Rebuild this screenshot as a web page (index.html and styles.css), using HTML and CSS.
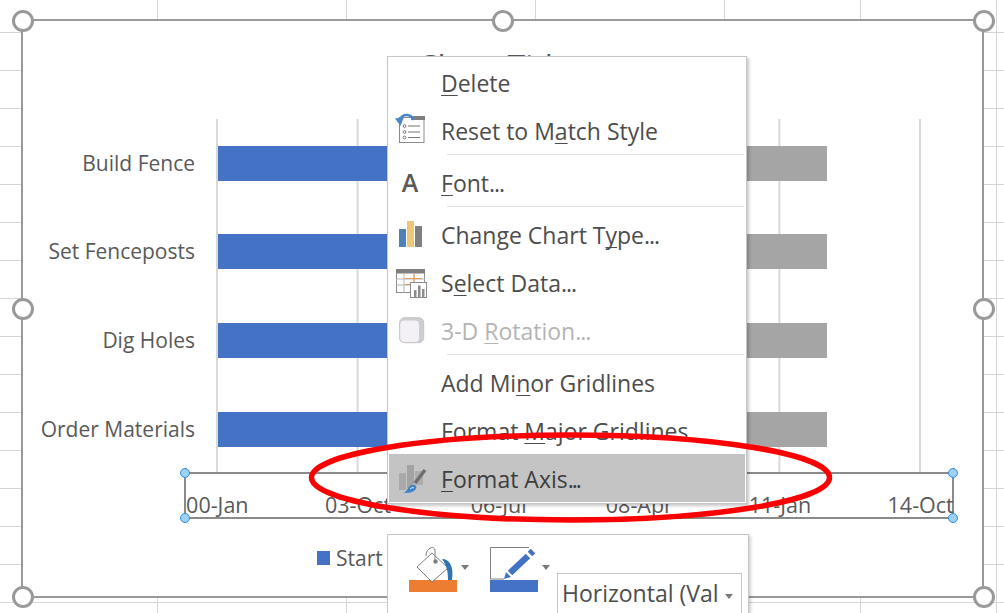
FILE: index.html
```html
<!DOCTYPE html>
<html lang="en">
<head>
<meta charset="utf-8">
<title>Format Axis</title>
<link rel="stylesheet" href="styles.css">
</head>
<body>
<div class="stage">
  <div class="chart">
    <span class="handle h-tl"></span><span class="handle h-tm"></span><span class="handle h-tr"></span>
    <span class="handle h-ml"></span><span class="handle h-mr"></span>
    <span class="handle h-bl"></span><span class="handle h-bm"></span><span class="handle h-br"></span>
    <div class="title">Chart Title</div>
    <div class="plot-wrap">
      <div class="cats">
        <div class="cat">Build Fence</div>
        <div class="cat">Set Fenceposts</div>
        <div class="cat">Dig Holes</div>
        <div class="cat">Order Materials</div>
      </div>
      <div class="plot">
        <div class="row"><div class="bar"><i class="seg-blue"></i><i class="seg-gray"></i></div></div>
        <div class="row"><div class="bar"><i class="seg-blue"></i><i class="seg-gray"></i></div></div>
        <div class="row"><div class="bar"><i class="seg-blue"></i><i class="seg-gray"></i></div></div>
        <div class="row"><div class="bar"><i class="seg-blue"></i><i class="seg-gray"></i></div></div>
      </div>
    </div>
    <div class="axis">
      <span class="dot d-tl"></span><span class="dot d-tr"></span><span class="dot d-bl"></span><span class="dot d-br"></span>
      <div class="ticks">
        <span>00-Jan</span><span>03-Oct</span><span>06-Jul</span><span>08-Apr</span><span>11-Jan</span><span>14-Oct</span>
      </div>
    </div>
    <div class="legend"><i class="swatch"></i><span>Start</span></div>
  </div>

  <div class="menu">
    <div class="item"><span class="ico"></span><span class="lbl"><u>D</u>elete</span></div>
    <div class="item"><span class="ico">
      <svg class="svg" width="30" height="30" viewBox="0 0 30 30">
        <rect x="4.500" y="4.500" width="24.500" height="25" fill="#fff" stroke="#8c8c8c"/>
        <rect x="16" y="3" width="14" height="4" fill="#7f7f7f"/>
        <g fill="#fff" stroke="#777"><circle cx="9.500" cy="13" r="1.400"/><circle cx="9.500" cy="19" r="1.400"/><circle cx="9.500" cy="24.500" r="1.400"/></g>
        <path d="M13 13h12M13 19h12M13 24.500h12" stroke="#777" fill="none"/>
        <path d="M18.500 7C16 0.500 8 0.500 5 6" fill="none" stroke="#4a86c5" stroke-width="2.600"/>
        <path d="M0 5.500L9 4L5.500 13Z" fill="#4a86c5"/>
      </svg></span><span class="lbl">Reset to M<u>a</u>tch Style</span></div>
    <div class="sep"></div>
    <div class="item"><span class="ico"><span class="glyph">A</span></span><span class="lbl"><u>F</u>ont<span class="dots">...</span></span></div>
    <div class="sep"></div>
    <div class="item"><span class="ico">
      <svg class="svg" width="30" height="30" viewBox="0 0 30 30">
        <rect x="4" y="12" width="7" height="18" fill="#4d82b8"/>
        <rect x="12" y="4" width="7" height="26" fill="#eec678"/>
        <rect x="20" y="9" width="7" height="21" fill="#7f7f7f"/>
      </svg></span><span class="lbl">Change Chart T<u>y</u>pe<span class="dots">...</span></span></div>
    <div class="item"><span class="ico">
      <svg class="svg" width="30" height="30" viewBox="0 0 30 30">
        <rect x="1.500" y="4.500" width="28" height="23" fill="#fff" stroke="#8c8c8c"/>
        <rect x="1" y="4" width="29" height="4.500" fill="#7f7f7f"/>
        <path d="M1 14h29M1 20h14M9 8v20M19 8v9" stroke="#b5b5b5" fill="none"/>
        <path d="M10 13.500h17M19 8.500v9M10 19.500h6" stroke="#ed9b52" fill="none"/>
        <rect x="15.500" y="17.500" width="16" height="15" fill="#fff" stroke="#8c8c8c"/>
        <path d="M19 32v-7h2.500v7zM23 32V20.500h2.500V32zM27 32v-8h2.500v8z" fill="#8c8c8c"/>
      </svg></span><span class="lbl">S<u>e</u>lect Data<span class="dots">...</span></span></div>
    <div class="item dis"><span class="ico">
      <svg class="svg" width="30" height="30" viewBox="0 0 30 30">
        <rect x="4.700" y="4.700" width="24" height="25" rx="5" fill="#cfcdd1" stroke="#c4c4c4"/>
        <rect x="4.700" y="7" width="20" height="22.500" rx="4" fill="#f3f0f6" stroke="#c9c9c9"/>
      </svg></span><span class="lbl">3-D <u>R</u>otation<span class="dots">...</span></span></div>
    <div class="sep"></div>
    <div class="item"><span class="ico"></span><span class="lbl">Add Mi<u>n</u>or Gridlines</span></div>
    <div class="item"><span class="ico"></span><span class="lbl">Format <u>M</u>ajor Gridlines</span></div>
    <div class="item active"><span class="ico">
      <svg class="svg" width="30" height="30" viewBox="0 0 30 30">
        <rect x="4" y="12" width="7" height="17" fill="#a9a9a9"/>
        <rect x="12" y="4" width="7" height="23" fill="#a3a3a3"/>
        <rect x="20" y="10" width="8" height="14" fill="#adadad"/>
        <path d="M30 9L20 22" stroke="#6e6e6e" stroke-width="3.500"/>
        <path d="M8 32C13 31 12 25 17 24C21 23 23 27 20 29C17 32 12 32 8 32Z" fill="#3f82cc"/>
        <path d="M15 28C16 27 18 26 19 27" stroke="#dbe9f7" fill="none"/>
      </svg></span><span class="lbl"><u>F</u>ormat Axis<span class="dots dots-tight">...</span></span></div>
  </div>

  <div class="toolbar">
    <div class="tool">
      <svg class="tool-svg" width="48" height="34" viewBox="0 0 48 34">
        <path d="M8 21L23 7L39 22L23 36Z" fill="#fff" stroke="#7f7f7f"/>
        <path d="M17 10C17 2 25 -1 26 4V15" fill="none" stroke="#7f7f7f"/>
        <circle cx="26.500" cy="15.500" r="2.200" fill="#7f7f7f"/>
        <path d="M33 13C41 13 45 21 43 34H39C39 26 38 20 33 13Z" fill="#2e75b6"/>
      </svg>
      <i class="tool-bar tb-orange"></i>
    </div>
    <i class="caret"></i>
    <div class="tool tool-2">
      <svg class="tool-svg" width="48" height="34" viewBox="0 0 48 34">
        <path d="M39 1.500H0.500V33H14" fill="none" stroke="#7f7f7f"/>
        <path d="M20 27L38 10" stroke="#4472c4" stroke-width="6.500"/>
        <path d="M40 8L43 5" stroke="#4472c4" stroke-width="6.500"/>
        <path d="M14 33L16 26L21 31Z" fill="#4472c4"/>
      </svg>
      <i class="tool-bar tb-blue"></i>
    </div>
    <i class="caret"></i>
    <div class="combo"><span class="combo-text">Horizontal (Val</span><i class="caret caret-combo"></i></div>
  </div>

  <svg class="ring" width="1004" height="613" viewBox="0 0 1004 613">
    <ellipse cx="570.500" cy="477.500" rx="259" ry="42.500" fill="none" stroke="#fb0000" stroke-width="5.500"/>
  </svg>
</div>
</body>
</html>
```
FILE: styles.css
```css
* { box-sizing: border-box; }
html, body { margin: 0; padding: 0; overflow: hidden; }
body { font-family: "Open Sans", "Noto Sans", sans-serif; color: #595959; }
i { display: block; }

.stage {
  position: relative;
  width: 1004px;
  height: 613px;
  overflow: hidden;
  background-color: #fff;
  background-repeat: repeat-y, no-repeat, no-repeat, no-repeat, no-repeat, no-repeat, no-repeat;
  background-image:
    linear-gradient(#d6d6d6 1px, transparent 1px),
    linear-gradient(#d6d6d6, #d6d6d6), linear-gradient(#d6d6d6, #d6d6d6), linear-gradient(#d6d6d6, #d6d6d6),
    linear-gradient(#d6d6d6, #d6d6d6), linear-gradient(#d6d6d6, #d6d6d6), linear-gradient(#d6d6d6, #d6d6d6);
  background-size: 100% 38px, 1px 100%, 1px 100%, 1px 100%, 1px 100%, 1px 100%, 1px 100%;
  background-position: 0 32px, 157px 0, 346px 0, 535px 0, 724px 0, 860px 0, 996px 0;
}

/* chart */
.chart {
  position: absolute;
  left: 21px;
  top: 19px;
  width: 963px;
  height: 579px;
  background: #fff;
  border: 2px solid #999;
}
.handle {
  position: absolute;
  width: 22px;
  height: 22px;
  border: 3.500px solid #999;
  border-radius: 50%;
  background: #fff;
}
.h-tl { left: -11px; top: -11px; }
.h-tm { left: 469px; top: -11px; }
.h-tr { left: 950px; top: -11px; }
.h-ml { left: -11px; top: 277px; }
.h-mr { left: 950px; top: 277px; }
.h-bl { left: -11px; top: 565px; }
.h-bm { left: 469px; top: 565px; }
.h-br { left: 950px; top: 565px; }

.title {
  padding-top: 28px;
  height: 98px;
  line-height: 36px;
  font-size: 32px;
  text-align: center;
  margin-left: -17px;
}
.plot-wrap { display: flex; }
.cats { width: 172px; margin-right: 21px; display: flex; flex-direction: column; }
.cat {
  height: 88.670px;
  display: flex;
  align-items: center;
  justify-content: flex-end;
  font-size: 21px;
  color: #595959;
  padding-bottom: 1px;
}
.plot {
  width: 706px;
  background-image: linear-gradient(90deg, #d9d9d9 2px, transparent 2px);
  background-size: 140.600px 100%;
}
.row { height: 88.670px; display: flex; align-items: center; padding-left: 2px; }
.bar { display: flex; height: 35px; }
.seg-blue { width: 320px; background: #4472c4; }
.seg-gray { width: 289px; background: #a5a5a5; }

.axis {
  position: relative;
  margin: -2px 0 0 161px;
  width: 770px;
  height: 47px;
  border: 2px solid #8a8a8a;
  display: flex;
  align-items: flex-end;
}
.ticks {
  flex: none;
  width: 844px;
  margin-left: -39px;
  display: grid;
  grid-template-columns: repeat(6, 1fr);
  font-size: 21.500px;
  line-height: 25px;
  text-align: center;
  color: #595959;
}
.dot {
  position: absolute;
  width: 10px;
  height: 10px;
  border-radius: 50%;
  background: #9fd0f5;
  border: 1px solid #2b8fe0;
}
.d-tl { left: -6px; top: -6px; }
.d-tr { right: -6px; top: -6px; }
.d-bl { left: -6px; bottom: -6px; }
.d-br { right: -6px; bottom: -6px; }

.legend {
  display: flex;
  align-items: center;
  gap: 6px;
  margin: 26px 0 0 294px;
  height: 26px;
  font-size: 21px;
  color: #595959;
}
.swatch { width: 13px; height: 14px; background: #4472c4; }

/* context menu */
.menu {
  position: absolute;
  left: 387px;
  top: 56px;
  width: 360px;
  padding: 1px;
  background: #fff;
  border: 1px solid #c6c6c6;
  box-shadow: 2px 2px 3px rgba(0, 0, 0, .22);
  color: #4d4d4d;
  font-size: 23px;
}
.item { display: flex; height: 48px; }
.ico { width: 52px; flex: none; padding: 7px 0 0 6px; }
.svg { display: block; overflow: visible; }
.glyph {
  display: block;
  width: 30px;
  text-align: center;
  font-size: 25px;
  font-weight: 600;
  line-height: 34px;
  color: #595959;
}
.lbl {
  align-self: center;
  padding-top: 2px;
  line-height: 28px;
  white-space: nowrap;
}
.lbl u { text-decoration-thickness: 1px; text-underline-offset: 3px; text-decoration-skip-ink: none; }
.dots { letter-spacing: -1px; }
.dots-tight { letter-spacing: -2px; }
.sep { height: 1px; margin: 0 1px 3px 58px; background: #e2e2e2; }
.dis { color: #b4b4b4; }
.active { background: #c4c4c4; color: #3e3e3e; }

/* mini toolbar */
.toolbar {
  position: absolute;
  left: 387px;
  top: 534px;
  width: 362px;
  height: 100px;
  padding: 11px 0 0 21px;
  display: flex;
  align-items: flex-start;
  background: #fff;
  border: 1px solid #c6c6c6;
  box-shadow: 2px 2px 3px rgba(0, 0, 0, .18);
}
.tool { width: 48px; flex: none; }
.tool-2 { margin-left: 21px; }
.tool-svg { display: block; overflow: visible; }
.tool-bar { height: 12px; }
.tb-orange { background: #ed7d31; }
.tb-blue { background: #4472c4; }
.caret {
  flex: none;
  width: 0;
  height: 0;
  margin: 19px 0 0 4px;
  border-left: 4px solid transparent;
  border-right: 4px solid transparent;
  border-top: 5px solid #7a7a7a;
}
.combo {
  flex: none;
  width: 185px;
  height: 80px;
  margin: 27px 0 0 7px;
  padding-left: 4px;
  border: 1px solid #c6c6c6;
  display: flex;
  font-size: 23px;
  color: #4d4d4d;
}
.combo-text { line-height: 38px; white-space: nowrap; }
.caret-combo { margin: 20px 0 0 6px; }

.ring { position: absolute; left: 0; top: 0; pointer-events: none; }
```
